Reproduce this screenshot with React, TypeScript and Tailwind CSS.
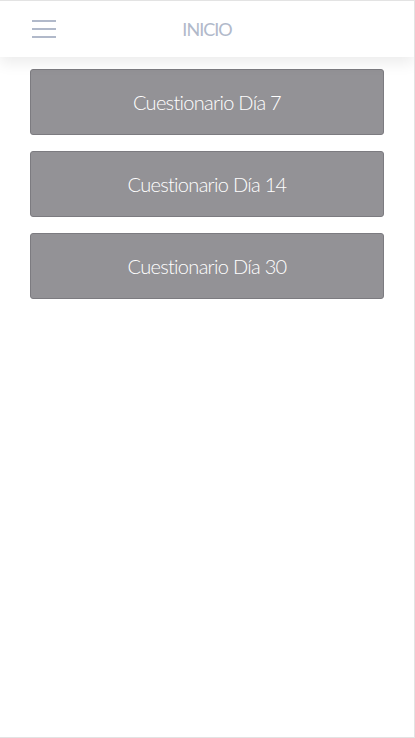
const items = ['Cuestionario Día 7', 'Cuestionario Día 14', 'Cuestionario Día 30'];

export default function App() {
  return (
    <div className="h-[738px] w-[415px] overflow-hidden border-t border-r border-b border-[#e3e3e3] bg-white font-['Lato',sans-serif]">
      <header className="relative z-10 flex h-[56px] items-center bg-white px-8 shadow-[0_6px_14px_rgba(0,0,0,0.08)]">
        <button className="flex w-6 flex-col gap-[6px]">
          <span className="h-[2px] w-6 bg-[#b1b9ca]"></span>
          <span className="h-[2px] w-6 bg-[#b1b9ca]"></span>
          <span className="h-[2px] w-6 bg-[#b1b9ca]"></span>
        </button>
        <h1 className="flex-1 pr-6 text-center text-[18px] tracking-[-1px] text-[#b1b9ca]">INICIO</h1>
      </header>
      <div className="flex flex-col gap-[16px] px-[30px] pt-[12px]">
        {items.map((label) => (
          <button
            key={label}
            className="flex h-[66px] w-[354px] items-center justify-center rounded-[3px] border border-[#7c7b80] bg-[#939296] text-[20px] font-light tracking-[-0.7px] text-white"
          >
            {label}
          </button>
        ))}
      </div>
    </div>
  );
}
